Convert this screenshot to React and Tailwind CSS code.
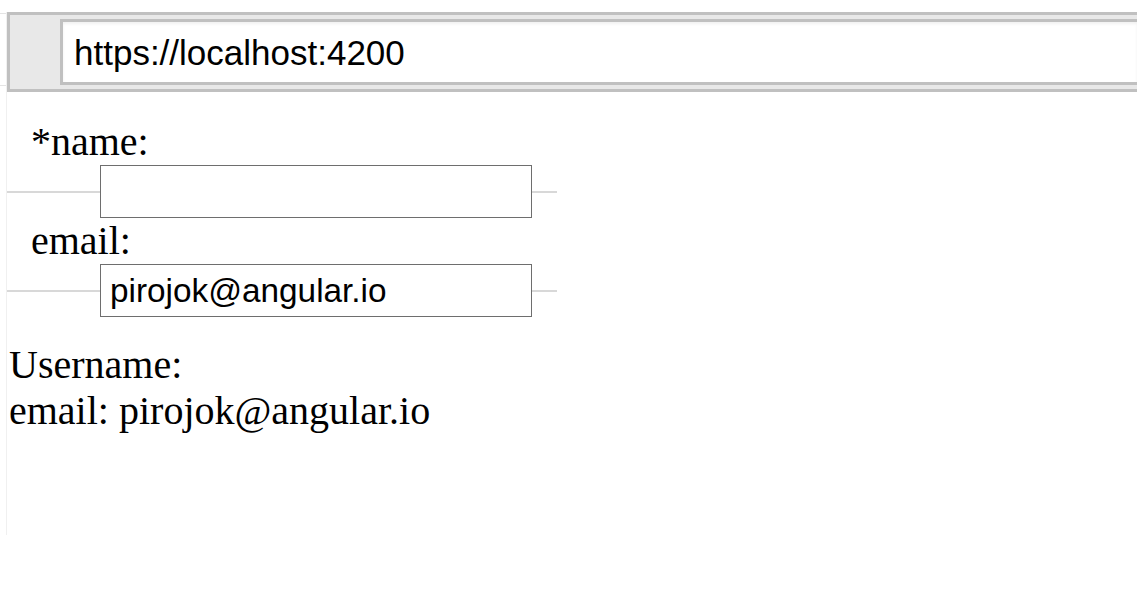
import React from 'react';

const Field = ({ label, value }) => (
  <>
    <div className="pl-[24px] text-[40px] leading-[46px] text-black">{label}</div>
    <div className="flex items-center">
      <div className="w-[93px] h-[2px] bg-[#d8d8d8]" />
      <input
        type="text"
        defaultValue={value}
        className="w-[432px] h-[53px] border border-[#6e6e6e] bg-white px-[9px] text-[33.33px] text-black font-['Liberation_Sans',Arial,sans-serif] outline-none"
      />
      <div className="w-[25px] h-[2px] bg-[#d8d8d8]" />
    </div>
  </>
);

const App = () => {
  return (
    <div className="flex h-[603px] bg-white font-['Liberation_Serif','Times_New_Roman',serif] overflow-hidden">
      <div className="w-[6px] shrink-0 flex flex-col">
        <div className="mt-[13px] h-px bg-[#e4e4e4]" />
        <div className="mt-[71px] h-px bg-[#e4e4e4]" />
      </div>

      <div className="flex-1 min-w-0 mt-[12px] h-[523px] border-l border-[#f0f0f0]">
        {/* address bar */}
        <div className="h-[80px] border-[3px] border-r-0 border-[#c0c0c0] bg-[#e8e8e8] py-[4px] pl-[50px]">
          <div className="h-[66px] border-[3px] border-r-0 border-[#c0c0c0] bg-white shadow-[inset_0_2px_3px_rgba(0,0,0,0.06)] flex items-center pl-[11px] pt-[2px] text-[35px] text-black font-['Liberation_Sans',Arial,sans-serif] whitespace-nowrap">
            https://localhost:4200
          </div>
        </div>

        {/* form */}
        <div className="mt-[27px]">
          <Field label="*name:" value="" />
          <Field label="email:" value="pirojok@angular.io" />
        </div>

        <div className="mt-[25px] pl-[2px] text-[40px] leading-[46px] text-black">
          <div>Username: </div>
          <div>email: pirojok@angular.io</div>
        </div>
      </div>
    </div>
  );
};

export default App;
